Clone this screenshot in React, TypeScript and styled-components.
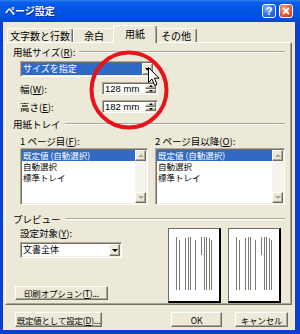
import styled, { createGlobalStyle, css } from 'styled-components';

const GlobalStyle = createGlobalStyle`
  html, body {
    margin: 0;
    padding: 0;
    background: #ffffff;
  }
  body {
    font-family: "Noto Sans CJK JP", "Liberation Sans", sans-serif;
  }
`;

/* classic 3D edges */
const sunken = css`
  box-sizing: border-box;
  border: 1px solid;
  border-color: #aca899 #ffffff #ffffff #aca899;
  padding: 1px;
  box-shadow: inset 1px 1px 0 #716f64, inset -1px -1px 0 #f1efe2;
  background: #ffffff;
`;

const raised = css`
  box-sizing: border-box;
  border: 1px solid;
  border-color: #ffffff #716f64 #716f64 #ffffff;
  box-shadow: inset -1px -1px 0 #aca899;
  background: #ece9d8;
`;

const Window = styled.div`
  position: relative;
  width: 300px;
  height: 334px;
  display: flex;
  flex-direction: column;
  overflow: hidden;
  color: #000;
  font-size: 9.5px;
  line-height: 12px;
`;

const TitleBar = styled.div`
  flex: 0 0 22px;
  display: flex;
  align-items: center;
  padding: 0 7px 0 5px;
  background: linear-gradient(
    180deg,
    #2f7ff0 0%,
    #0a5de8 12%,
    #0054e6 50%,
    #0250dc 82%,
    #0743c4 100%
  );
`;

const Title = styled.span`
  color: #fff;
  font-size: 10px;
  font-weight: bold;
  text-shadow: 1px 1px 0 #0a2a8a;
`;

const CaptionButtons = styled.div`
  margin-left: auto;
  display: flex;
  gap: 3px;
`;

const CaptionButton = styled.div<{ $close?: boolean }>`
  width: 14px;
  height: 14px;
  box-sizing: border-box;
  border: 1px solid #ffffff;
  border-radius: 3px;
  display: flex;
  align-items: center;
  justify-content: center;
  color: #fff;
  font-family: "Liberation Sans", sans-serif;
  font-weight: bold;
  font-size: 11px;
  line-height: 11px;
  background: ${(p) =>
    p.$close
      ? 'radial-gradient(circle at 35% 30%, #f5a184 0%, #e4552f 55%, #c23512 100%)'
      : 'radial-gradient(circle at 35% 30%, #8ab8ff 0%, #2d6ff0 55%, #174ec8 100%)'};
`;

const Frame = styled.div`
  flex: 1;
  display: flex;
  flex-direction: column;
  background: #ece9d8;
  border-style: solid;
  border-color: #0b41d2;
  border-width: 0 5px 4px 3px;
  padding: 0 3px 0 2px;
`;

const TabStrip = styled.div`
  height: 20px;
  display: flex;
  align-items: flex-end;
  padding-left: 2px;
`;

const Tab = styled.div<{ $w: number; $active?: boolean }>`
  position: relative;
  z-index: ${(p) => (p.$active ? 1 : 0)};
  width: ${(p) => p.$w}px;
  height: ${(p) => (p.$active ? 18 : 14)}px;
  margin: ${(p) => (p.$active ? '0 -2px -1px -2px' : '0')};
  box-sizing: border-box;
  display: flex;
  align-items: center;
  justify-content: center;
  padding-bottom: ${(p) => (p.$active ? 2 : 0)}px;
  font-size: 10px;
  background: #ece9d8;
  border: 1px solid;
  border-bottom: none;
  border-color: #ffffff #716f64 transparent #ffffff;
  border-radius: 3px 3px 0 0;
  box-shadow: inset -1px 0 0 #aca899;
`;

const Panel = styled.div`
  height: 263px;
  box-sizing: border-box;
  border: 1px solid;
  border-color: #ffffff #716f64 #716f64 #ffffff;
  box-shadow: inset -1px -1px 0 #aca899;
  padding: 3px 6px 0 7px;
  display: flex;
  flex-direction: column;
`;

const GroupHead = styled.div<{ $mt?: number }>`
  height: 12px;
  margin-top: ${(p) => p.$mt ?? 0}px;
  display: flex;
  align-items: center;
  gap: 4px;
  white-space: nowrap;
`;

const GroupLine = styled.div`
  flex: 1;
  height: 0;
  border-top: 1px solid #aca899;
  border-bottom: 1px solid #ffffff;
`;

const Key = styled.span`
  text-decoration: underline;
`;

const Indent = styled.div<{ $mt?: number }>`
  margin-top: ${(p) => p.$mt ?? 0}px;
  padding-left: 7px;
  display: flex;
  flex-direction: column;
`;

const Combo = styled.div<{ $w: number }>`
  ${sunken}
  width: ${(p) => p.$w}px;
  height: 16px;
  display: flex;
`;

const ComboText = styled.div<{ $selected?: boolean }>`
  flex: 1;
  padding-left: 1px;
  font-size: 9px;
  line-height: 12px;
  white-space: nowrap;
  background: ${(p) => (p.$selected ? '#316ac5' : '#ffffff')};
  color: ${(p) => (p.$selected ? '#ffffff' : '#000000')};
`;

const DropButton = styled.div`
  ${raised}
  width: 11px;
  display: flex;
  align-items: center;
  justify-content: center;
`;

const Arrow = styled.span<{ $dir: 'up' | 'down'; $half: number; $color?: string }>`
  width: 0;
  height: 0;
  border-left: ${(p) => p.$half}px solid transparent;
  border-right: ${(p) => p.$half}px solid transparent;
  ${(p) =>
    p.$dir === 'down'
      ? `border-top: ${p.$half}px solid ${p.$color ?? '#000'};`
      : `border-bottom: ${p.$half}px solid ${p.$color ?? '#000'};`}
`;

const SpinRow = styled.div<{ $mt: number }>`
  margin-top: ${(p) => p.$mt}px;
  height: 13px;
  display: flex;
  align-items: center;
`;

const FieldLabel = styled.span<{ $w: number }>`
  width: ${(p) => p.$w}px;
  white-space: nowrap;
`;

const SpinField = styled.div`
  ${sunken}
  width: 56px;
  height: 13px;
  display: flex;
`;

const SpinValue = styled.span`
  flex: 1;
  padding-left: 1px;
  font-family: "Liberation Sans", sans-serif;
  font-size: 9.5px;
  line-height: 9px;
`;

const SpinButtons = styled.div`
  width: 11px;
  display: flex;
  flex-direction: column;
`;

const SpinHalf = styled.div`
  ${raised}
  flex: 1;
  display: flex;
  align-items: center;
  justify-content: center;
`;

const ListGrid = styled.div`
  margin-top: 5px;
  padding-left: 7px;
  display: grid;
  grid-template-columns: 128px 130px;
  grid-template-rows: 12px 57px;
  column-gap: 7px;
  row-gap: 1px;
  white-space: nowrap;
`;

const ListBox = styled.div`
  ${sunken}
  display: flex;
`;

const ListItems = styled.div`
  flex: 1;
  display: flex;
  flex-direction: column;
  font-size: 8.5px;
  line-height: 11px;
`;

const ListItem = styled.div<{ $selected?: boolean }>`
  height: 11px;
  padding-left: 1px;
  white-space: nowrap;
  background: ${(p) => (p.$selected ? '#316ac5' : 'transparent')};
  color: ${(p) => (p.$selected ? '#ffffff' : '#000000')};
`;

const ScrollBar = styled.div`
  width: 11px;
  display: flex;
  flex-direction: column;
  justify-content: space-between;
  background: #f4f3ee;
`;

const ScrollButton = styled.div`
  ${raised}
  height: 11px;
  display: flex;
  align-items: center;
  justify-content: center;
`;

const PreviewRow = styled.div`
  display: flex;
`;

const PreviewLeft = styled.div`
  width: 155px;
  display: flex;
  flex-direction: column;
`;

const PreviewLabel = styled.div`
  height: 12px;
  margin: 2px 0 0 7px;
  white-space: nowrap;
`;

const PreviewCombo = styled.div`
  margin: 3px 0 0 7px;
`;

const PushButton = styled.div<{ $w: number; $h?: number }>`
  ${raised}
  width: ${(p) => p.$w}px;
  height: ${(p) => p.$h ?? 15}px;
  display: flex;
  align-items: center;
  justify-content: center;
  font-size: 8.5px;
  line-height: 10px;
  letter-spacing: -0.2px;
  white-space: nowrap;
`;

const OptionButton = styled(PushButton)`
  margin: 28px 0 0 2px;
`;

const Pages = styled.div`
  margin-top: 3px;
  display: flex;
  gap: 7px;
`;

const Page = styled.div`
  width: 53px;
  height: 75px;
  box-sizing: border-box;
  background: #ffffff;
  border-style: solid;
  border-width: 1px 2px 2px 1px;
  border-color: #6d6d6d #000000 #000000 #6d6d6d;
`;

const ButtonRow = styled.div`
  margin-top: 7px;
  height: 15px;
  display: flex;
  padding: 0 4px 0 10px;
`;

const Spacer = styled.div`
  flex: 1;
`;

const Gap = styled.div<{ $w: number }>`
  width: ${(p) => p.$w}px;
`;

const Overlay = styled.svg<{ $x: number; $y: number }>`
  position: absolute;
  left: ${(p) => p.$x}px;
  top: ${(p) => p.$y}px;
  pointer-events: none;
`;

const pageLines: [number, number, number][] = [
  [7.5, 8, 61],
  [10.5, 11, 61],
  [16.5, 9, 61],
  [19.5, 8, 61],
  [21.5, 8, 61],
  [26.5, 11, 61],
  [32.5, 8, 26],
  [35.5, 8, 61],
  [37.5, 8, 61],
  [40.5, 9, 61],
  [42.5, 11, 61],
];

const PreviewPage = () => (
  <Page>
    <svg width="50" height="72" viewBox="0 0 50 72">
      {pageLines.map(([x, y1, y2]) => (
        <line key={x} x1={x} x2={x} y1={y1} y2={y2} stroke="#7a7a7a" strokeWidth="1" />
      ))}
    </svg>
  </Page>
);

const Spin = ({ value }: { value: string }) => (
  <SpinField>
    <SpinValue>{value}</SpinValue>
    <SpinButtons>
      <SpinHalf>
        <Arrow $dir="up" $half={2} />
      </SpinHalf>
      <SpinHalf>
        <Arrow $dir="down" $half={2} />
      </SpinHalf>
    </SpinButtons>
  </SpinField>
);

const TrayList = () => (
  <ListBox>
    <ListItems>
      <ListItem $selected>既定値 (自動選択)</ListItem>
      <ListItem>自動選択</ListItem>
      <ListItem>標準トレイ</ListItem>
    </ListItems>
    <ScrollBar>
      <ScrollButton>
        <Arrow $dir="up" $half={3} $color="#aca899" />
      </ScrollButton>
      <ScrollButton>
        <Arrow $dir="down" $half={3} $color="#aca899" />
      </ScrollButton>
    </ScrollBar>
  </ListBox>
);

export default function App() {
  return (
    <Window>
      <GlobalStyle />
      <TitleBar>
        <Title>ページ設定</Title>
        <CaptionButtons>
          <CaptionButton>?</CaptionButton>
          <CaptionButton $close>
            <svg width="8" height="8" viewBox="0 0 8 8">
              <path d="M1 1 L7 7 M7 1 L1 7" stroke="#fff" strokeWidth="1.8" />
            </svg>
          </CaptionButton>
        </CaptionButtons>
      </TitleBar>

      <Frame>
        <TabStrip>
          <Tab $w={66}>文字数と行数</Tab>
          <Tab $w={42}>余白</Tab>
          <Tab $w={44} $active>
            用紙
          </Tab>
          <Tab $w={42}>その他</Tab>
        </TabStrip>

        <Panel>
          <GroupHead>
            <span>
              用紙サイズ(<Key>R</Key>):
            </span>
            <GroupLine />
          </GroupHead>
          <Indent $mt={3}>
            <Combo $w={135}>
              <ComboText $selected>サイズを指定</ComboText>
              <DropButton>
                <Arrow $dir="down" $half={3} />
              </DropButton>
            </Combo>
          </Indent>
          <Indent>
            <SpinRow $mt={5}>
              <FieldLabel $w={82}>
                幅(<Key>W</Key>):
              </FieldLabel>
              <Spin value="128 mm" />
            </SpinRow>
            <SpinRow $mt={5}>
              <FieldLabel $w={82}>
                高さ(<Key>E</Key>):
              </FieldLabel>
              <Spin value="182 mm" />
            </SpinRow>
          </Indent>

          <GroupHead $mt={5}>
            <span>用紙トレイ</span>
            <GroupLine />
          </GroupHead>
          <ListGrid>
            <span>
              1 ページ目(<Key>F</Key>):
            </span>
            <span>
              2 ページ目以降(<Key>O</Key>):
            </span>
            <TrayList />
            <TrayList />
          </ListGrid>

          <GroupHead $mt={8}>
            <span>プレビュー</span>
            <GroupLine />
          </GroupHead>
          <PreviewRow>
            <PreviewLeft>
              <PreviewLabel>
                設定対象(<Key>Y</Key>):
              </PreviewLabel>
              <PreviewCombo>
                <Combo $w={102}>
                  <ComboText>文書全体</ComboText>
                  <DropButton>
                    <Arrow $dir="down" $half={3} />
                  </DropButton>
                </Combo>
              </PreviewCombo>
              <OptionButton $w={93} $h={14}>
                印刷オプション(<Key>T</Key>)...
              </OptionButton>
            </PreviewLeft>
            <Pages>
              <PreviewPage />
              <PreviewPage />
            </Pages>
          </PreviewRow>
        </Panel>

        <ButtonRow>
          <PushButton $w={87}>
            既定値として設定(<Key>D</Key>)...
          </PushButton>
          <Spacer />
          <PushButton $w={51}>OK</PushButton>
          <Gap $w={13} />
          <PushButton $w={53}>キャンセル</PushButton>
        </ButtonRow>
      </Frame>

      {/* annotation drawn over the dialog */}
      <Overlay $x={88} $y={49} width="82" height="82" viewBox="0 0 82 82">
        <ellipse cx="41" cy="41" rx="37.5" ry="37.5" fill="none" stroke="#e8141b" strokeWidth="4" />
      </Overlay>
      <Overlay $x={148} $y={67} width="13" height="20" viewBox="0 0 13 20">
        <path
          d="M0.5 0.5 L0.5 15.5 L4 12 L6.7 18.5 L9 17.5 L6.4 11.2 L11 11.2 Z"
          fill="#fff"
          stroke="#000"
          strokeWidth="1"
          strokeLinejoin="miter"
        />
      </Overlay>
    </Window>
  );
}
